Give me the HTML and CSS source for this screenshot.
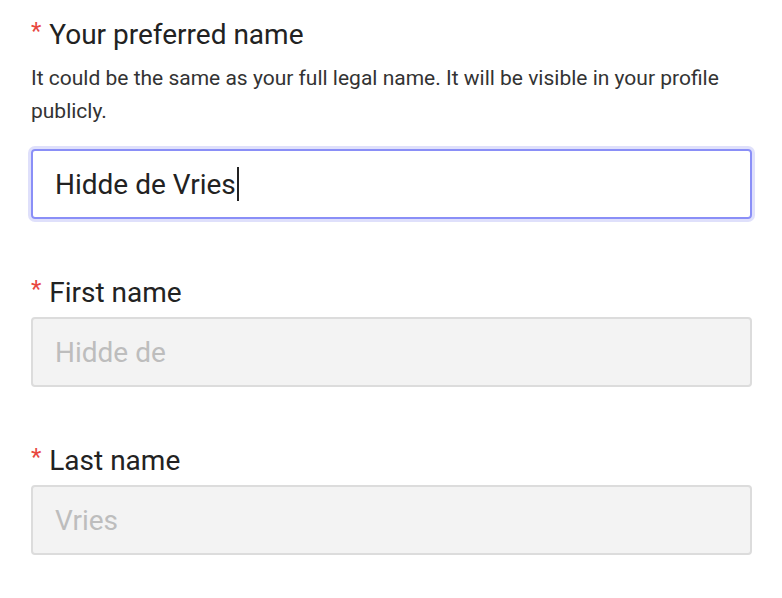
FILE: index.html
```html
<!DOCTYPE html>
<html lang="en">
<head>
<meta charset="utf-8">
<link rel="stylesheet" href="styles.css">
</head>
<body>
<form class="form">
  <div class="field">
    <label class="label"><span class="req">*</span> Your preferred name</label>
    <p class="hint">It could be the same as your full legal name. It will be visible in your profile publicly.</p>
    <div class="input focused">Hidde de Vries<span class="caret"></span></div>
  </div>
  <div class="field">
    <label class="label"><span class="req">*</span> First name</label>
    <div class="input disabled">Hidde de</div>
  </div>
  <div class="field">
    <label class="label"><span class="req">*</span> Last name</label>
    <div class="input disabled">Vries</div>
  </div>
</form>
</body>
</html>
```
FILE: styles.css
```css
html, body {
  margin: 0;
  background: #fff;
}
body {
  font-family: Roboto, "Liberation Sans", sans-serif;
  color: #222;
}
.form {
  padding: 15px 30px 0 31px;
  width: 721px;
  display: flex;
  flex-direction: column;
  gap: 54px;
}
.field {
  display: flex;
  flex-direction: column;
}
.label {
  font-size: 28px;
  line-height: 40px;
  color: #222;
}
.req {
  color: #e8473f;
  font-size: 24px;
  line-height: 0;
  vertical-align: 5px;
  margin-right: 1px;
}
.hint {
  margin: 7px 0 21px;
  font-size: 21px;
  line-height: 33px;
  color: #333;
}
.input {
  box-sizing: border-box;
  height: 70px;
  border-radius: 4px;
  padding: 0 22px;
  font-size: 28px;
  display: flex;
  align-items: center;
  margin-top: 4px;
}
.focused {
  border: 2px solid #8a8ff7;
  box-shadow: 0 0 0 3px #dfe0fb;
  color: #222;
  margin-top: 0;
}
.disabled {
  border: 2px solid #dcdcdc;
  background: #f3f3f3;
  color: #bdbdbd;
}
.caret {
  display: inline-block;
  width: 2px;
  height: 34px;
  background: #222;
  margin-left: 1px;
}
```
